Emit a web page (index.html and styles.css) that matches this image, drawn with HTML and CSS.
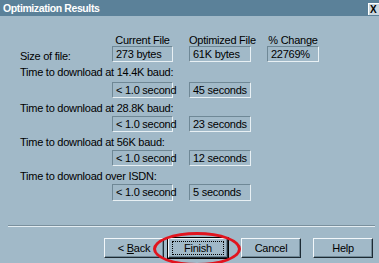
FILE: index.html
```html
<!DOCTYPE html>
<html lang="en">
<head>
  <meta charset="UTF-8" />
  <title>Optimization Results</title>
  <link rel="stylesheet" href="styles.css">
</head>
<body>
  <div class="window">
    <div class="titlebar">
      <span class="title">Optimization Results</span>
      <span class="close">X</span>
    </div>

    <div class="results">
      <div class="col-head">Current File</div>
      <div class="col-head">Optimized File</div>
      <div class="col-head">% Change</div>

      <div class="row-label">Size of file:</div>
      <div class="field">273 bytes</div>
      <div class="field">61K bytes</div>
      <div class="field">22769%</div>

      <div class="group-label">Time to download at 14.4K baud:</div>
      <div class="field">&lt; 1.0 second</div>
      <div class="field">45 seconds</div>

      <div class="group-label">Time to download at 28.8K baud:</div>
      <div class="field">&lt; 1.0 second</div>
      <div class="field">23 seconds</div>

      <div class="group-label">Time to download at 56K baud:</div>
      <div class="field">&lt; 1.0 second</div>
      <div class="field">12 seconds</div>

      <div class="group-label">Time to download over ISDN:</div>
      <div class="field">&lt; 1.0 second</div>
      <div class="field">5 seconds</div>
    </div>

    <div class="separator"></div>

    <div class="buttons">
      <button class="btn">&lt; <u>B</u>ack</button>
      <button class="btn default"><span class="focus">Finish</span></button>
      <button class="btn cancel">Cancel</button>
      <button class="btn help">Help</button>
    </div>

    <div class="highlight"></div>
  </div>
</body>
</html>
```

FILE: styles.css
```css
body { margin: 0; background: #a1b9c8; font-family: "Liberation Sans", Arial, sans-serif; font-size: 11px; letter-spacing: -0.25px; color: #000; overflow: hidden; }
.window { position: relative; width: 379px; height: 263px; overflow: hidden; }

.titlebar { display: flex; align-items: center; height: 16px; background: #5b8199; }
.title { padding-left: 3px; color: #fff; font-weight: bold; font-size: 10.5px; letter-spacing: -0.4px; }
.close { margin-left: auto; width: 9px; height: 11px; margin-top: 1px; background: #c9d6de; border-top: 1px solid #fff; border-left: 1px solid #fff; font-weight: bold; font-size: 10px; line-height: 11px; padding-left: 1px; overflow: hidden; }

.results { display: grid; grid-template-columns: 76px 61px 62px 52px; grid-template-rows: 12px 16px 20px 16px 18px 16px 18px 16px 18px 17px; column-gap: 16px; padding: 18px 0 0 20px; }
.col-head { text-align: center; line-height: 12px; white-space: nowrap; }
.col-head:first-child { grid-column: 2; }
.row-label { line-height: 16px; padding-top: 2px; }
.group-label { grid-column: 1 / -1; line-height: 18px; padding-top: 1px; }
.group-label + .field { grid-column: 2; }
.field { box-sizing: border-box; border: 1px solid; border-color: #6f8896 #e8f0f4 #e8f0f4 #6f8896; padding-left: 3px; line-height: 14px; white-space: nowrap; }

.separator { margin: 24px 4px 0 8px; border-top: 1px solid #7a909d; border-bottom: 1px solid #e3ecf1; }

.buttons { display: flex; padding: 11px 0 0 104px; }
.btn { box-sizing: border-box; width: 60px; height: 20px; margin-right: 4px; padding: 0; background: #a1b9c8; font: inherit; letter-spacing: inherit; color: #000; border: 1px solid; border-color: #f2f7fa #1d2a33 #1d2a33 #f2f7fa; box-shadow: inset -1px -1px 0 #6f8896; }
.btn.default { outline: 1px solid #000; }
.btn.cancel { margin-left: 9px; }
.btn.help { margin-left: 8px; }
.focus { display: block; margin: 2px 3px; border: 1px dotted #000; line-height: 12px; }

.highlight { position: absolute; left: 153px; top: 232px; width: 82px; height: 28px; border: 3px solid #e1141e; border-radius: 50%; }
```
